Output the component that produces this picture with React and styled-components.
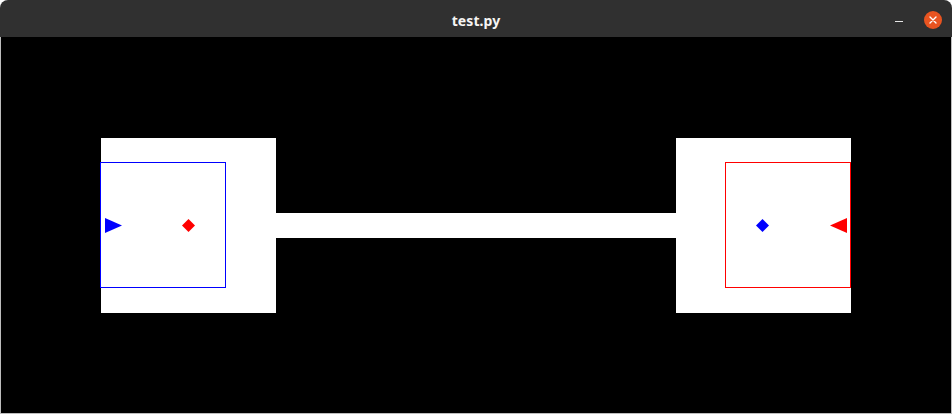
import React from "react";
import styled, { createGlobalStyle } from "styled-components";

const GlobalStyle = createGlobalStyle`
  html, body {
    margin: 0;
    padding: 0;
    background: #ffffff;
  }
  body {
    font-family: "Noto Sans", "DejaVu Sans", sans-serif;
  }
`;

const BLUE = "#0000ff";
const RED = "#ff0000";

const Window = styled.div`
  width: 952px;
  height: 414px;
  display: flex;
  flex-direction: column;
  box-sizing: border-box;
`;

const TitleBar = styled.div`
  height: 37px;
  flex: none;
  box-sizing: border-box;
  padding: 3px 10px 0 10px;
  display: grid;
  grid-template-columns: 1fr auto 1fr;
  align-items: center;
  background: #303030;
  border-radius: 8px 8px 0 0;
`;

const Title = styled.span`
  grid-column: 2;
  color: #f6f5f4;
  font-size: 14px;
  font-weight: 700;
  letter-spacing: 0.1px;
`;

const Controls = styled.div`
  grid-column: 3;
  justify-self: end;
  display: flex;
  align-items: center;
  gap: 21px;
`;

const MinimizeButton = styled.div`
  width: 8px;
  height: 1px;
  margin-top: 3px;
  background: #e6e6e6;
`;

const CloseButton = styled.div`
  width: 18px;
  height: 18px;
  border-radius: 50%;
  background: #e95420;
  display: grid;
  place-items: center;
`;

const Canvas = styled.div`
  flex: 1;
  background: #000000;
  border: 1px solid #bdbdbd;
  border-top: none;
  display: flex;
  align-items: center;
  justify-content: center;
`;

const Room = styled.div`
  width: 175px;
  height: 175px;
  background: #ffffff;
  display: flex;
  align-items: center;
  justify-content: ${(p) => (p.$side === "left" ? "flex-start" : "flex-end")};
`;

const Corridor = styled.div`
  width: 400px;
  height: 25px;
  background: #ffffff;
`;

const Zone = styled.div`
  width: 126px;
  height: 126px;
  box-sizing: border-box;
  margin-left: ${(p) => (p.$side === "left" ? "-1px" : "0")};
  margin-top: -1px;
  border: 1px solid ${(p) => p.$color};
  display: flex;
  flex-direction: ${(p) => (p.$side === "left" ? "row" : "row-reverse")};
  align-items: center;
  padding: ${(p) => (p.$side === "left" ? "2px 0 0 4px" : "2px 3px 0 0")};
`;

const Ship = styled.svg`
  flex: none;
  width: 17px;
  height: 15px;
`;

const Target = styled.svg`
  flex: none;
  width: 13px;
  height: 13px;
  margin: ${(p) => (p.$side === "left" ? "0 0 0 60px" : "0 61px 0 0")};
`;

const Player = ({ side, color }) => (
  <Ship viewBox="0 0 17 15">
    {side === "left" ? (
      <polygon points="0,0 0,15 17,7.5" fill={color} />
    ) : (
      <polygon points="17,0 17,15 0,7.5" fill={color} />
    )}
  </Ship>
);

const Diamond = ({ side, color }) => (
  <Target $side={side} viewBox="0 0 13 13">
    <polygon points="6.5,0 13,6.5 6.5,13 0,6.5" fill={color} />
  </Target>
);

const Base = ({ side, color, enemy }) => (
  <Room $side={side}>
    <Zone $side={side} $color={color}>
      <Player side={side} color={color} />
      <Diamond side={side} color={enemy} />
    </Zone>
  </Room>
);

export default function App() {
  return (
    <>
      <GlobalStyle />
      <Window>
        <TitleBar>
          <Title>test.py</Title>
          <Controls>
            <MinimizeButton />
            <CloseButton>
              <svg width="8" height="8" viewBox="0 0 8 8">
                <path
                  d="M1 1 L7 7 M7 1 L1 7"
                  stroke="#ffffff"
                  strokeWidth="1.4"
                  strokeLinecap="round"
                />
              </svg>
            </CloseButton>
          </Controls>
        </TitleBar>
        <Canvas>
          <Base side="left" color={BLUE} enemy={RED} />
          <Corridor />
          <Base side="right" color={RED} enemy={BLUE} />
        </Canvas>
      </Window>
    </>
  );
}
